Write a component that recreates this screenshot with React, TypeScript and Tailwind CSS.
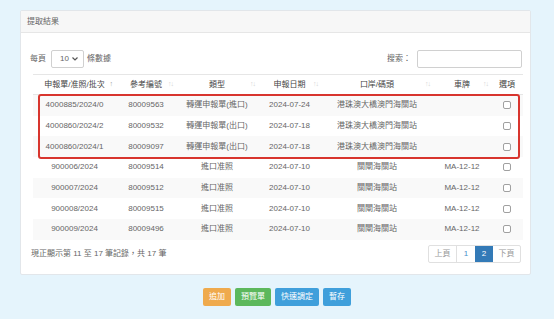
import { ReactNode } from "react";

type Row = {
  no: string;
  ref: string;
  type: string;
  date: string;
  port: string;
  plate: string;
};

const rows: Row[] = [
  { no: "4000885/2024/0", ref: "80009563", type: "轉運申報單(進口)", date: "2024-07-24", port: "港珠澳大橋澳門海關站", plate: "" },
  { no: "4000860/2024/2", ref: "80009532", type: "轉運申報單(出口)", date: "2024-07-18", port: "港珠澳大橋澳門海關站", plate: "" },
  { no: "4000860/2024/1", ref: "80009097", type: "轉運申報單(出口)", date: "2024-07-18", port: "港珠澳大橋澳門海關站", plate: "" },
  { no: "900006/2024", ref: "80009514", type: "進口准照", date: "2024-07-10", port: "關閘海關站", plate: "MA-12-12" },
  { no: "900007/2024", ref: "80009512", type: "進口准照", date: "2024-07-10", port: "關閘海關站", plate: "MA-12-12" },
  { no: "900008/2024", ref: "80009515", type: "進口准照", date: "2024-07-10", port: "關閘海關站", plate: "MA-12-12" },
  { no: "900009/2024", ref: "80009496", type: "進口准照", date: "2024-07-10", port: "關閘海關站", plate: "MA-12-12" },
];

const cols = ["w-[83px]", "w-[60px]", "w-[82px]", "w-[63px]", "w-[112px]", "w-[58px]", "w-[32px]"];

function Th(props: { w: string; children: ReactNode; sort?: "asc" | "both" }) {
  return (
    <div className={`${props.w} relative flex items-center justify-center h-full`}>
      <span>{props.children}</span>
      {props.sort === "asc" && <span className="absolute right-[3px] text-[7px] text-[#999]">↑</span>}
      {props.sort === "both" && <span className="absolute right-[3px] text-[7px] text-[#d4d4d4] tracking-[-1px]">↑↓</span>}
    </div>
  );
}

function Td(props: { w: string; children: ReactNode }) {
  return <div className={`${props.w} flex items-center justify-center h-full whitespace-nowrap`}>{props.children}</div>;
}

function Btn(props: { color: string; children: ReactNode }) {
  return (
    <button className={`${props.color} h-[18px] px-[6px] rounded-[2px] text-white text-[8px] leading-none`}>
      {props.children}
    </button>
  );
}

export default function App() {
  return (
    <div
      className="w-[554px] h-[319px] bg-[#e5f4fc] overflow-hidden"
      style={{ fontFamily: '"Liberation Sans", "Noto Sans CJK TC", sans-serif' }}
    >
      <div className="pt-[10px] pl-[20px]">
        <div className="w-[511px] h-[265px] bg-white border border-[#e2e6ea] rounded-[2px] flex flex-col">
          <div className="h-[22px] bg-[#f7f7f7] border-b border-[#e6e6e6] flex items-center pl-[6px] text-[8px] text-[#666]">
            提取結果
          </div>

          <div className="pl-[9px] pr-[8px] pt-[17px] text-[8px] text-[#666]">
            <div className="flex items-center justify-between h-[18px]">
              <div className="flex items-center">
                <span>每頁</span>
                <div className="ml-[5px] w-[33px] h-[18px] border border-[#d0d0d0] rounded-[2px] flex items-center justify-between pl-[8px] pr-[5px]">
                  <span>10</span>
                  <svg width="6" height="4" viewBox="0 0 6 4" fill="none" stroke="#555" strokeWidth="1.2">
                    <path d="M0.5 0.5 L3 3 L5.5 0.5" />
                  </svg>
                </div>
                <span className="ml-[3px]">條數據</span>
              </div>
              <div className="flex items-center">
                <span>搜索：</span>
                <div className="ml-[6px] w-[105px] h-[18px] border border-[#d0d0d0] rounded-[2px]" />
              </div>
            </div>

            <div className="ml-[3px] mt-[6px] w-[490px]">
              <div className="flex h-[21px] border-t border-b border-[#e6e6e6] text-[#444]">
                <Th w={cols[0]} sort="asc">申報單/准照/批次</Th>
                <Th w={cols[1]} sort="both">參考編號</Th>
                <Th w={cols[2]} sort="both">類型</Th>
                <Th w={cols[3]} sort="both">申報日期</Th>
                <Th w={cols[4]} sort="both">口岸/碼頭</Th>
                <Th w={cols[5]} sort="both">車牌</Th>
                <Th w={cols[6]}>選項</Th>
              </div>
              <div className="relative">
                {rows.map((r, i) => (
                  <div key={i} className={`flex h-[20.7px] ${i % 2 === 0 ? "bg-[#f9f9f9]" : "bg-white"}`}>
                    <Td w={cols[0]}>{r.no}</Td>
                    <Td w={cols[1]}>{r.ref}</Td>
                    <Td w={cols[2]}>{r.type}</Td>
                    <Td w={cols[3]}>{r.date}</Td>
                    <Td w={cols[4]}>{r.port}</Td>
                    <Td w={cols[5]}>{r.plate}</Td>
                    <Td w={cols[6]}>
                      <div className="w-[8px] h-[8px] border border-[#a0a0a0] rounded-[2px] bg-white" />
                    </Td>
                  </div>
                ))}
                <div className="absolute left-[5px] right-[3px] top-[-1px] h-[65px] border-2 border-[#d8352e] rounded-[3px] pointer-events-none" />
              </div>
            </div>

            <div className="flex items-center justify-between mt-[5px]">
              <span className="ml-[1px]">現正顯示第 11 至 17 筆記錄，共 17 筆</span>
              <div className="flex h-[18px] border border-[#e0e0e0] rounded-[2px] text-[#4a8fcb] mr-[1px]">
                <div className="w-[28px] flex items-center justify-center border-r border-[#e0e0e0] text-[#999]">上頁</div>
                <div className="w-[18px] flex items-center justify-center">1</div>
                <div className="w-[18px] flex items-center justify-center bg-[#337ab7] text-white">2</div>
                <div className="w-[27px] flex items-center justify-center text-[#999]">下頁</div>
              </div>
            </div>
          </div>
        </div>
      </div>

      <div className="flex justify-center gap-[4px] mt-[13px]">
        <Btn color="bg-[#efaa4d]">追加</Btn>
        <Btn color="bg-[#5cb85c]">預覽單</Btn>
        <Btn color="bg-[#3f9fdb]">快速調定</Btn>
        <Btn color="bg-[#3f9fdb]">暫存</Btn>
      </div>
    </div>
  );
}
